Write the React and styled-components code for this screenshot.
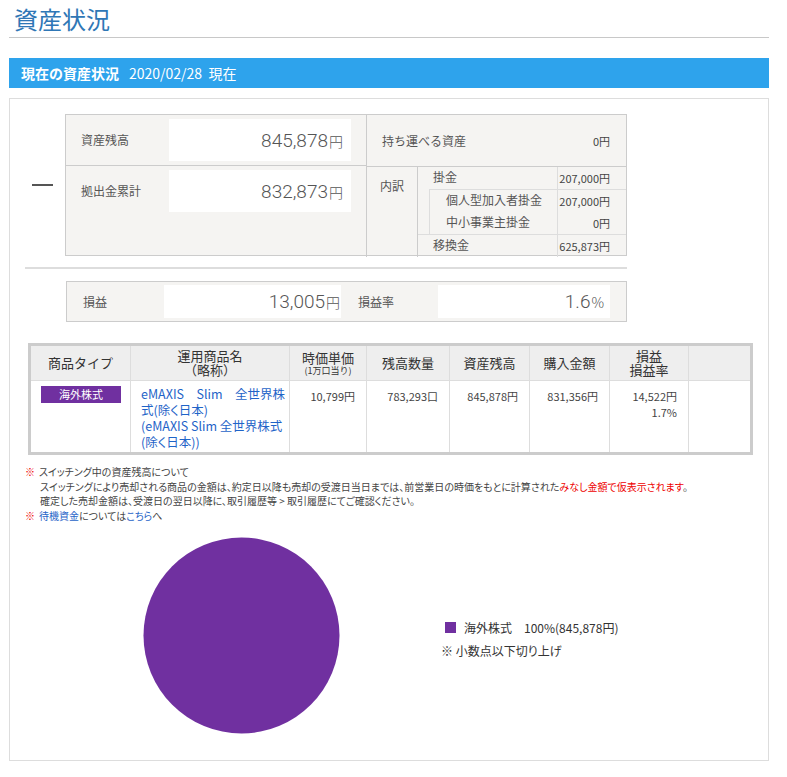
import React from "react";
import styled, { createGlobalStyle } from "styled-components";

const GlobalStyle = createGlobalStyle`
  body {
    margin: 0;
    background: #fff;
    font-family: "Noto Sans CJK JP", "Noto Sans", sans-serif;
    color: #333;
  }
`;

const Page = styled.div`
  width: 760px;
  padding-left: 9px;
`;

const Title = styled.h1`
  margin: 0;
  font-size: 24px;
  font-weight: 400;
  line-height: 30px;
  color: #2f77b6;
  padding: 4px 0 3px 5px;
  border-bottom: 1px solid #c8c8c8;
`;

const SectionBar = styled.div`
  margin-top: 20px;
  height: 30px;
  background: #2ea3ec;
  color: #fff;
  display: flex;
  align-items: center;
  gap: 10px;
  padding-left: 12px;
  font-size: 14px;
`;

const BarTitle = styled.span`
  font-weight: 700;
`;

const Panel = styled.div`
  margin-top: 10px;
  height: 663px;
  box-sizing: border-box;
  border: 1px solid #ddd;
  padding: 15px 18px 0 15px;
`;

const SummaryRow = styled.div`
  display: flex;
  align-items: center;
  width: 602px;
`;

const DashCol = styled.div`
  width: 40px;
  display: flex;
  padding-left: 7px;
  box-sizing: border-box;
`;

const Dash = styled.div`
  width: 21px;
  height: 2px;
  background: #555;
`;

const SummaryBox = styled.div`
  width: 562px;
  height: 142px;
  box-sizing: border-box;
  background: #f5f4f2;
  border: 1px solid #ccc;
  display: grid;
  grid-template-columns: 301px 1fr;
`;

const LeftCol = styled.div`
  border-right: 1px solid #ccc;
`;

const AmountRow = styled.div`
  display: flex;
  align-items: center;
  padding: ${(p) => (p.$first ? "4px 0 4px" : "4px 0 0")};
  border-bottom: ${(p) => (p.$first ? "1px solid #ccc" : "none")};
`;

const AmountLabel = styled.div`
  width: 103px;
  box-sizing: border-box;
  padding-left: 15px;
  font-size: 12px;
  color: #555;
  line-height: 42px;
`;

const ValueBox = styled.div`
  width: ${(p) => p.$w}px;
  height: ${(p) => p.$h}px;
  background: #fff;
  display: flex;
  align-items: center;
  justify-content: flex-end;
  padding-right: ${(p) => p.$pr}px;
  box-sizing: border-box;
  font-family: Roboto, "Liberation Sans", sans-serif;
  font-weight: 300;
  font-size: 19px;
  color: #555;
`;

const Yen = styled.span`
  font-family: "Noto Sans CJK JP", sans-serif;
  font-size: 14px;
  margin-left: 1px;
  align-self: flex-end;
  margin-bottom: ${(p) => p.$mb || 10}px;
`;

const RightCol = styled.div`
  display: flex;
  flex-direction: column;
`;

const TopRow = styled.div`
  height: 51px;
  border-bottom: 1px solid #ccc;
  display: flex;
  align-items: center;
  justify-content: space-between;
  padding: 0 16px 0 15px;
  font-size: 12px;
  color: #555;
`;

const SmallValue = styled.span`
  font-size: 11px;
  color: #444;
`;

const BreakdownRow = styled.div`
  flex: 1;
  display: flex;
`;

const BreakdownHead = styled.div`
  width: 50px;
  border-right: 1px solid #ccc;
  text-align: center;
  padding-top: 10px;
  font-size: 12px;
  color: #555;
`;

const BreakdownBody = styled.div`
  flex: 1;
  display: flex;
  flex-direction: column;
`;

const ItemRow = styled.div`
  display: grid;
  grid-template-columns: 1fr 69px;
  height: 22px;
  border-top: ${(p) => (p.$top ? "1px solid #ddd" : "none")};
`;

const ItemLabel = styled.div`
  padding-left: ${(p) => p.$pl || 15}px;
  font-size: 12px;
  color: #555;
  line-height: 20px;
`;

const ItemValue = styled.div`
  border-left: 1px solid #ddd;
  text-align: right;
  padding-right: 16px;
  font-size: 11px;
  color: #444;
  line-height: 22px;
`;

const SubGroup = styled.div`
  margin-left: 11px;
  border-left: 1px solid #ddd;
  border-top: 1px solid #ddd;
`;

const Separator = styled.div`
  margin-top: 11px;
  width: 602px;
  height: 2px;
  background: #ddd;
`;

const ProfitBox = styled.div`
  margin: 12px 0 0 41px;
  width: 561px;
  height: 41px;
  box-sizing: border-box;
  background: #f5f4f2;
  border: 1px solid #ccc;
  display: flex;
  align-items: center;
`;

const ProfitLabel = styled.div`
  width: ${(p) => p.$w}px;
  box-sizing: border-box;
  padding-left: ${(p) => p.$pl}px;
  font-size: 12px;
  color: #555;
`;

const Table = styled.table`
  margin: 21px 0 0 3px;
  width: 722px;
  border: 3px solid #ccc;
  border-collapse: collapse;
  table-layout: fixed;
`;

const Th = styled.th`
  background: #eee;
  font-weight: 400;
  font-size: 13px;
  line-height: 14px;
  color: #333;
  height: 34px;
  border: 1px solid #ddd;
  text-align: center;
  vertical-align: middle;
  padding: 0;
`;

const ThSmall = styled.span`
  display: block;
  font-size: 9px;
  line-height: 11px;
`;

const Td = styled.td`
  border: 1px solid #ddd;
  vertical-align: top;
  height: 73px;
  box-sizing: border-box;
  padding: ${(p) => (p.$num ? "7px 11px 0 0" : p.$link ? "5px 4px 0 10px" : "5px 10px 0")};
  text-align: ${(p) => (p.$num ? "right" : "left")};
  font-size: ${(p) => (p.$num ? "11px" : "12.5px")};
  line-height: 16px;
  white-space: nowrap;
  color: ${(p) => (p.$link ? "#1f64c8" : "#444")};
  font-feature-settings: ${(p) => (p.$link ? '"palt"' : "normal")};
`;

const Badge = styled.div`
  margin: 0 auto;
  width: 80px;
  height: 17px;
  background: #7030a0;
  color: #fff;
  font-size: 11px;
  line-height: 17px;
  text-align: center;
`;

const Notes = styled.div`
  margin-top: 10px;
  font-size: 10px;
  line-height: 14.5px;
  color: #444;
  font-feature-settings: "palt";
`;

const NoteLine = styled.div`
  padding-left: ${(p) => (p.$indent ? 15 : 0)}px;
`;

const Mark = styled.span`
  color: #e00;
  margin-right: 4px;
`;

const Red = styled.span`
  color: #e00;
`;

const Link = styled.a`
  color: #1f64c8;
  text-decoration: none;
`;

const ChartArea = styled.div`
  margin-top: 14px;
  display: flex;
  align-items: center;
`;

const PieWrap = styled.div`
  margin-left: 118px;
  width: 197px;
  height: 197px;
`;

const Legend = styled.div`
  margin-left: 101px;
  margin-top: 6px;
  font-size: 12px;
  color: #333;
  display: flex;
  flex-direction: column;
  gap: 6px;
  font-feature-settings: "palt";
`;

const LegendItem = styled.div`
  display: flex;
  align-items: center;
  padding-left: 4px;
`;

const Swatch = styled.span`
  width: 11px;
  height: 11px;
  background: #7030a0;
  margin-right: 8px;
`;

export default function App() {
  return (
    <>
      <GlobalStyle />
      <Page>
        <Title>資産状況</Title>
        <SectionBar>
          <BarTitle>現在の資産状況</BarTitle>
          <span>2020/02/28&nbsp;&nbsp;現在</span>
        </SectionBar>
        <Panel>
          <SummaryRow>
            <DashCol>
              <Dash />
            </DashCol>
            <SummaryBox>
              <LeftCol>
                <AmountRow $first>
                  <AmountLabel>資産残高</AmountLabel>
                  <ValueBox $w={182} $h={42} $pr={8}>
                    845,878<Yen>円</Yen>
                  </ValueBox>
                </AmountRow>
                <AmountRow>
                  <AmountLabel>拠出金累計</AmountLabel>
                  <ValueBox $w={182} $h={42} $pr={8}>
                    832,873<Yen>円</Yen>
                  </ValueBox>
                </AmountRow>
              </LeftCol>
              <RightCol>
                <TopRow>
                  <span>持ち運べる資産</span>
                  <SmallValue>0円</SmallValue>
                </TopRow>
                <BreakdownRow>
                  <BreakdownHead>内訳</BreakdownHead>
                  <BreakdownBody>
                    <ItemRow>
                      <ItemLabel>掛金</ItemLabel>
                      <ItemValue>207,000円</ItemValue>
                    </ItemRow>
                    <SubGroup>
                      <ItemRow>
                        <ItemLabel $pl={16}>個人型加入者掛金</ItemLabel>
                        <ItemValue>207,000円</ItemValue>
                      </ItemRow>
                      <ItemRow>
                        <ItemLabel $pl={16}>中小事業主掛金</ItemLabel>
                        <ItemValue>0円</ItemValue>
                      </ItemRow>
                    </SubGroup>
                    <ItemRow $top>
                      <ItemLabel>移換金</ItemLabel>
                      <ItemValue>625,873円</ItemValue>
                    </ItemRow>
                  </BreakdownBody>
                </BreakdownRow>
              </RightCol>
            </SummaryBox>
          </SummaryRow>
          <Separator />
          <ProfitBox>
            <ProfitLabel $w={97} $pl={16}>損益</ProfitLabel>
            <ValueBox $w={177} $h={33} $pr={1}>
              13,005<Yen $mb={6}>円</Yen>
            </ValueBox>
            <ProfitLabel $w={97} $pl={17}>損益率</ProfitLabel>
            <ValueBox $w={172} $h={33} $pr={6}>
              1.6<Yen $mb={6}>%</Yen>
            </ValueBox>
          </ProfitBox>
          <Table>
            <colgroup>
              <col style={{ width: 101 }} />
              <col style={{ width: 159 }} />
              <col style={{ width: 77 }} />
              <col style={{ width: 83 }} />
              <col style={{ width: 80 }} />
              <col style={{ width: 80 }} />
              <col style={{ width: 79 }} />
              <col style={{ width: 63 }} />
            </colgroup>
            <thead>
              <tr>
                <Th>商品タイプ</Th>
                <Th>
                  運用商品名
                  <br />
                  （略称）
                </Th>
                <Th>
                  時価単価
                  <ThSmall>(1万口当り)</ThSmall>
                </Th>
                <Th>残高数量</Th>
                <Th>資産残高</Th>
                <Th>購入金額</Th>
                <Th>
                  損益
                  <br />
                  損益率
                </Th>
                <Th />
              </tr>
            </thead>
            <tbody>
              <tr>
                <Td>
                  <Badge>海外株式</Badge>
                </Td>
                <Td $link>
                  eMAXIS　Slim　全世界株
                  <br />
                  式(除く日本)
                  <br />
                  (eMAXIS Slim 全世界株式
                  <br />
                  (除く日本))
                </Td>
                <Td $num>10,799円</Td>
                <Td $num>783,293口</Td>
                <Td $num>845,878円</Td>
                <Td $num>831,356円</Td>
                <Td $num>
                  14,522円
                  <br />
                  1.7%
                </Td>
                <Td $num />
              </tr>
            </tbody>
          </Table>
          <Notes>
            <NoteLine>
              <Mark>※</Mark>スイッチング中の資産残高について
            </NoteLine>
            <NoteLine $indent>
              スイッチングにより売却される商品の金額は、約定日以降も売却の受渡日当日までは、前営業日の時価をもとに計算された
              <Red>みなし金額で仮表示されます</Red>。
            </NoteLine>
            <NoteLine $indent>
              確定した売却金額は、受渡日の翌日以降に、取引履歴等 &gt; 取引履歴にてご確認ください。
            </NoteLine>
            <NoteLine>
              <Mark>※</Mark>
              <Link href="#">待機資金</Link>については<Link href="#">こちら</Link>へ
            </NoteLine>
          </Notes>
          <ChartArea>
            <PieWrap>
              <svg width="197" height="197" viewBox="0 0 197 197">
                <circle cx="98.5" cy="98.5" r="98" fill="#7030a0" />
              </svg>
            </PieWrap>
            <Legend>
              <LegendItem>
                <Swatch />
                海外株式　100%(845,878円)
              </LegendItem>
              <div>※ 小数点以下切り上げ</div>
            </Legend>
          </ChartArea>
        </Panel>
      </Page>
    </>
  );
}
